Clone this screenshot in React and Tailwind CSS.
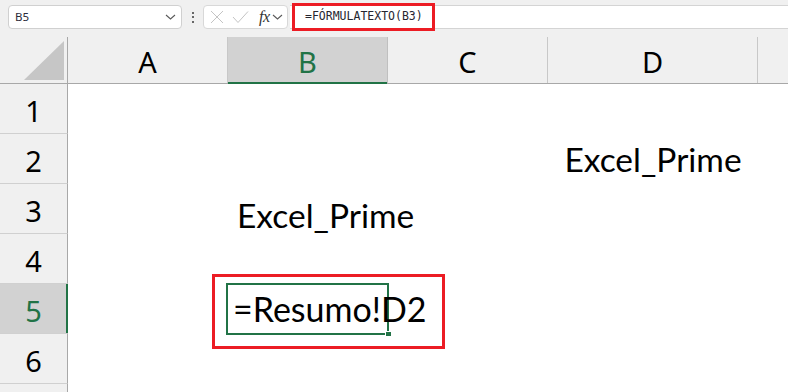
import React from "react";

const Chevron = ({ className }) => (
  <svg className={className} width="11" height="6" viewBox="0 0 11 6" fill="none">
    <polyline points="1,1 5.5,5 10,1" stroke="#5a5a5a" strokeWidth="1.1" />
  </svg>
);

const cols = [
  { key: "A", w: "w-[160px]" },
  { key: "B", w: "w-[160px]" },
  { key: "C", w: "w-[160px]" },
  { key: "D", w: "w-[210px]" },
];

function Cell({ row, col }) {
  if (row === 2 && col === "D") {
    return (
      <div className="relative z-10 pt-[9px] text-center font-['Lato'] text-[33.5px] leading-none text-black whitespace-nowrap">
        Excel_Prime
      </div>
    );
  }
  if (row === 3 && col === "B") {
    return (
      <div className="relative z-10 pt-[15px] pl-[9px] font-['Lato'] text-[33.5px] leading-none text-black whitespace-nowrap">
        Excel_Prime
      </div>
    );
  }
  if (row === 5 && col === "B") {
    return (
      <>
        <div className="absolute z-10 -left-[2px] -top-[1px] -right-[1px] -bottom-[1px] border-2 border-[#217346]" />
        <div className="absolute z-10 -right-[4px] -bottom-[3px] w-[7px] h-[6px] bg-[#217346] border border-white" />
        <div className="relative z-20 pt-[8px] pl-[5px] font-['Lato'] text-[34px] leading-none text-black whitespace-nowrap">
          =Resumo!D2
        </div>
        <div className="absolute z-30 -left-[16px] -top-[10px] w-[233px] h-[75px] border-[3px] border-[#ec1c24]" />
      </>
    );
  }
  return null;
}

export default function App() {
  const rows = [1, 2, 3, 4, 5, 6, 7];
  return (
    <div className="w-[788px] h-[392px] overflow-hidden bg-[#f0f0f0] flex flex-col font-['Noto_Sans',sans-serif]">
      {/* toolbar */}
      <div className="h-[37px] shrink-0 flex items-start pt-[5px] pl-[8px]">
        <div className="w-[174px] h-[24px] bg-white border border-[#d0d0d0] rounded-[4px] flex items-center pl-[6px] pr-[5px]">
          <span className="text-[11.5px] text-[#2a2a3a] leading-none flex-1">B5</span>
          <Chevron />
        </div>
        <div className="w-[21px] h-[24px] flex flex-col items-center justify-center gap-[2.5px]">
          <span className="w-[2px] h-[2px] bg-[#3a3a3a] rounded-full" />
          <span className="w-[2px] h-[2px] bg-[#3a3a3a] rounded-full" />
          <span className="w-[2px] h-[2px] bg-[#3a3a3a] rounded-full" />
        </div>
        <div className="w-[85px] h-[24px] bg-white border border-[#d8d8d8] rounded-[4px] flex items-center pl-[5px]">
          <svg width="14" height="14" viewBox="0 0 14 14" className="ml-[1px]">
            <line x1="1" y1="1" x2="13" y2="13" stroke="#c4c4c4" strokeWidth="1" />
            <line x1="13" y1="1" x2="1" y2="13" stroke="#c4c4c4" strokeWidth="1" />
          </svg>
          <svg width="17" height="14" viewBox="0 0 17 14" className="ml-[8px]">
            <polyline points="1,7 6,12.5 16,1.5" fill="none" stroke="#c4c4c4" strokeWidth="1" />
          </svg>
          <span className="ml-[10px] font-['Liberation_Serif',serif] italic text-[16px] leading-none text-[#333] tracking-[-0.5px]">
            fx
          </span>
          <Chevron className="ml-[2px]" />
        </div>
        <div className="relative ml-[2px] flex-1 h-[24px] bg-white border-y border-[#d4d4d4] flex items-center pl-[15px]">
          <span className="font-['DejaVu_Sans_Mono',monospace] text-[11.5px] leading-none text-[#262630] whitespace-nowrap">
            =FÓRMULATEXTO(B3)
          </span>
          <div className="absolute left-[2px] -top-[3px] w-[143px] h-[28px] border-[3px] border-[#ec1c24]" />
        </div>
      </div>

      {/* column header */}
      <div className="h-[47px] shrink-0 flex border-b border-[#a8a8a8]">
        <div className="relative w-[68px] shrink-0 border-r border-[#a8a8a8]">
          <svg className="absolute left-0 top-0" width="68" height="47" viewBox="0 0 68 47">
            <polygon points="64,4 64,43 24,43" fill="#c6c6c6" />
          </svg>
        </div>
        {cols.map((c) => {
          const sel = c.key === "B";
          return (
            <div
              key={c.key}
              className={
                c.w +
                " shrink-0 relative flex justify-center pt-[10px] text-[29px] leading-none border-r " +
                (sel ? "bg-[#d2d2d2] text-[#217346] border-[#c0c0c0]" : "text-black border-[#c8c8c8]")
              }
            >
              {c.key}
              {sel && <div className="absolute left-0 right-0 -bottom-[1px] h-[2px] bg-[#217346]" />}
            </div>
          );
        })}
        <div className="flex-1" />
      </div>

      {/* rows */}
      {rows.map((r) => {
        const sel = r === 5;
        return (
          <div key={r} className="h-[50px] shrink-0 flex bg-white">
            <div
              className={
                "relative w-[68px] shrink-0 border-r border-b border-b-[#d0d0d0] border-r-[#a8a8a8] flex justify-center pt-[12px] text-[29px] leading-none " +
                (sel ? "bg-[#d2d2d2] text-[#217346]" : "bg-[#f0f0f0] text-black")
              }
            >
              {r < 7 ? r : ""}
              {sel && <div className="absolute -right-[1px] top-0 bottom-0 w-[2px] bg-[#217346]" />}
            </div>
            {cols.map((c) => (
              <div key={c.key} className={c.w + " shrink-0 relative"}>
                <Cell row={r} col={c.key} />
              </div>
            ))}
            <div className="flex-1" />
          </div>
        );
      })}
    </div>
  );
}
